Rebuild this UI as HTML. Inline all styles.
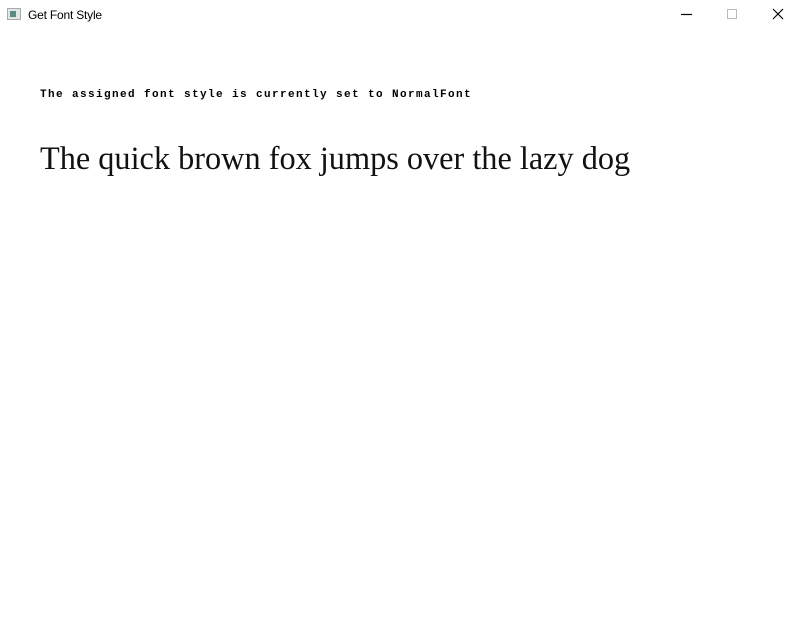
<!DOCTYPE html>
<html><head><style>
body{margin:0;width:800px;height:630px;background:#fff;position:relative;overflow:hidden;font-family:"Liberation Sans",sans-serif}
.title{position:absolute;left:28px;top:8px;font-size:12px;color:#000;letter-spacing:-0.2px}
.icon{position:absolute;left:7px;top:8px;width:14px;height:12px;border:1px solid #aaa;background:#dfe8e6;box-sizing:border-box}
.icon:after{content:"";position:absolute;left:2px;top:2px;width:6px;height:6px;background:#5a8a80}
.small{position:absolute;left:40px;top:89px;font-family:"Liberation Mono",monospace;font-weight:bold;font-size:11px;letter-spacing:1.4px;color:#000}
.big{position:absolute;left:40px;top:140px;font-family:"Liberation Serif",serif;font-size:32.3px;color:#111;white-space:nowrap}
</style></head><body>
<div class="icon"></div>
<div class="title">Get Font Style</div>
<svg style="position:absolute;left:670px;top:4px" width="130" height="22">
<line x1="11" y1="10.5" x2="22" y2="10.5" stroke="#000" stroke-width="1.2"/>
<rect x="57.5" y="5.5" width="9" height="9" fill="none" stroke="#bbb"/>
<path d="M103 5 L113 15 M113 5 L103 15" stroke="#000" stroke-width="1.2"/>
</svg>
<div class="small">The assigned font style is currently set to NormalFont</div>
<div class="big">The quick brown fox jumps over the lazy dog</div>
</body></html>
